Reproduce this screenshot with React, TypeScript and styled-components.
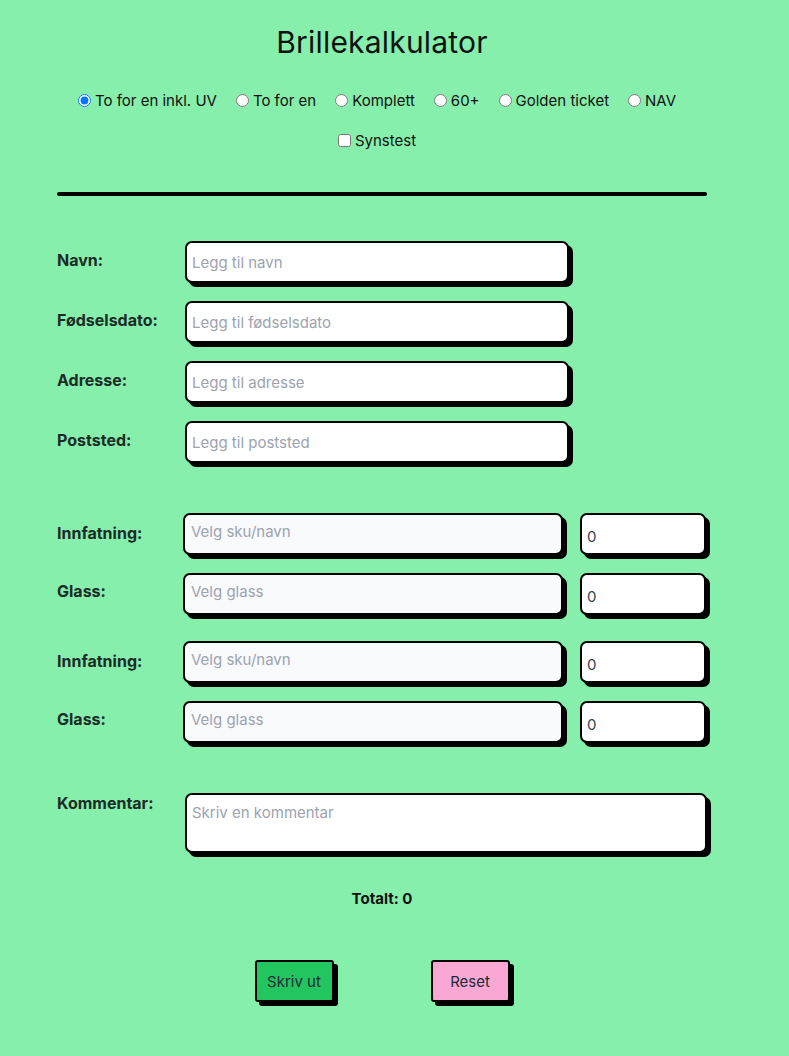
import React from "react";
import styled, { createGlobalStyle } from "styled-components";

const Global = createGlobalStyle`
  html, body { margin: 0; padding: 0; background: #86efac; }
  body { font-family: Inter, "Noto Sans", sans-serif; color: #111; }
  * { box-sizing: border-box; }
`;

const Page = styled.div`
  width: 650px;
  margin-left: 57px;
  padding-top: 24px;
  padding-bottom: 40px;
`;

const Title = styled.h1`
  margin: 0;
  text-align: center;
  font-size: 30px;
  font-weight: 400;
  line-height: 36px;
  letter-spacing: 0.2px;
`;

const RadioRow = styled.div`
  display: flex;
  justify-content: center;
  gap: 19px;
  margin-top: 31px;
  margin-left: -10px;
  font-size: 15px;
`;

const Choice = styled.label`
  display: flex;
  align-items: center;
  gap: 4px;
  input { margin: 0; width: 13px; height: 13px; }
`;

const CheckRow = styled.div`
  display: flex;
  justify-content: center;
  margin-top: 21px;
  margin-left: -10px;
  font-size: 15px;
`;

const Rule = styled.hr`
  border: none;
  height: 4px;
  background: #000;
  border-radius: 2px;
  margin: 42px 0 0 0;
`;

const Section = styled.div<{ $top: number }>`
  display: flex;
  flex-direction: column;
  gap: 18px;
  margin-top: ${(p) => p.$top}px;
`;

const Row = styled.div<{ $labelW?: number }>`
  display: grid;
  grid-template-columns: ${(p) => p.$labelW ?? 128}px auto auto;
  justify-content: start;
  align-items: start;
`;

const Label = styled.label<{ $pad?: number }>`
  font-weight: 700;
  font-size: 16px;
  color: #1c2b27;
  padding-top: ${(p) => p.$pad ?? 9}px;
`;

const boxStyle = `
  border: 2px solid #000;
  border-radius: 7px;
  box-shadow: 4px 4px 0 #000;
  font-family: Inter, "Noto Sans", sans-serif;
  font-size: 15px;
  color: #374151;
  outline: none;
  &::placeholder { color: #9ca3af; }
`;

const TextInput = styled.input<{ $w: number }>`
  ${boxStyle}
  width: ${(p) => p.$w}px;
  height: 42px;
  padding: 0 5px;
  background: #fff;
`;

const SelectBox = styled.input`
  ${boxStyle}
  width: 380px;
  height: 42px;
  padding: 0 6px 6px;
  background: #f9fafb;
`;

const Qty = styled.input`
  ${boxStyle}
  width: 126px;
  height: 42px;
  padding: 4px 5px 0;
  background: #fff;
  margin-left: 17px;
`;

const Comment = styled.textarea`
  ${boxStyle}
  width: 522px;
  height: 60px;
  padding: 8px 5px;
  resize: none;
  background: #fff;
`;

const Total = styled.div`
  text-align: center;
  font-weight: 700;
  font-size: 15px;
  margin-top: 36px;
`;

const Buttons = styled.div`
  display: flex;
  justify-content: center;
  gap: 97px;
  margin-top: 52px;
`;

const Btn = styled.button<{ $bg: string }>`
  width: 79px;
  height: 42px;
  background: ${(p) => p.$bg};
  border: 2px solid #000;
  border-radius: 3px;
  box-shadow: 4px 4px 0 #000;
  font-family: Inter, "Noto Sans", sans-serif;
  font-size: 15px;
  color: #1f2937;
  padding: 0;
`;

const radios = ["To for en inkl. UV", "To for en", "Komplett", "60+", "Golden ticket", "NAV"];

export default function App() {
  return (
    <>
      <Global />
      <Page>
        <Title>Brillekalkulator</Title>
        <RadioRow>
          {radios.map((r, i) => (
            <Choice key={r}>
              <input type="radio" name="pkg" defaultChecked={i === 0} />
              {r}
            </Choice>
          ))}
        </RadioRow>
        <CheckRow>
          <Choice>
            <input type="checkbox" />
            Synstest
          </Choice>
        </CheckRow>
        <Rule />
        <Section $top={45}>
          <Row>
            <Label>Navn:</Label>
            <TextInput $w={384} placeholder="Legg til navn" />
          </Row>
          <Row>
            <Label>Fødselsdato:</Label>
            <TextInput $w={384} placeholder="Legg til fødselsdato" />
          </Row>
          <Row>
            <Label>Adresse:</Label>
            <TextInput $w={384} placeholder="Legg til adresse" />
          </Row>
          <Row>
            <Label>Poststed:</Label>
            <TextInput $w={384} placeholder="Legg til poststed" />
          </Row>
        </Section>
        <Section $top={50}>
          <Row $labelW={126}>
            <Label $pad={10}>Innfatning:</Label>
            <SelectBox placeholder="Velg sku/navn" />
            <Qty defaultValue="0" />
          </Row>
          <Row $labelW={126}>
            <Label $pad={8}>Glass:</Label>
            <SelectBox placeholder="Velg glass" />
            <Qty defaultValue="0" />
          </Row>
        </Section>
        <Section $top={26}>
          <Row $labelW={126}>
            <Label $pad={10}>Innfatning:</Label>
            <SelectBox placeholder="Velg sku/navn" />
            <Qty defaultValue="0" />
          </Row>
          <Row $labelW={126}>
            <Label $pad={8}>Glass:</Label>
            <SelectBox placeholder="Velg glass" />
            <Qty defaultValue="0" />
          </Row>
        </Section>
        <Section $top={50}>
          <Row>
            <Label $pad={0}>Kommentar:</Label>
            <Comment placeholder="Skriv en kommentar" />
          </Row>
        </Section>
        <Total>Totalt: 0</Total>
        <Buttons>
          <Btn $bg="#22c55e">Skriv ut</Btn>
          <Btn $bg="#f9a8d4">Reset</Btn>
        </Buttons>
      </Page>
    </>
  );
}
